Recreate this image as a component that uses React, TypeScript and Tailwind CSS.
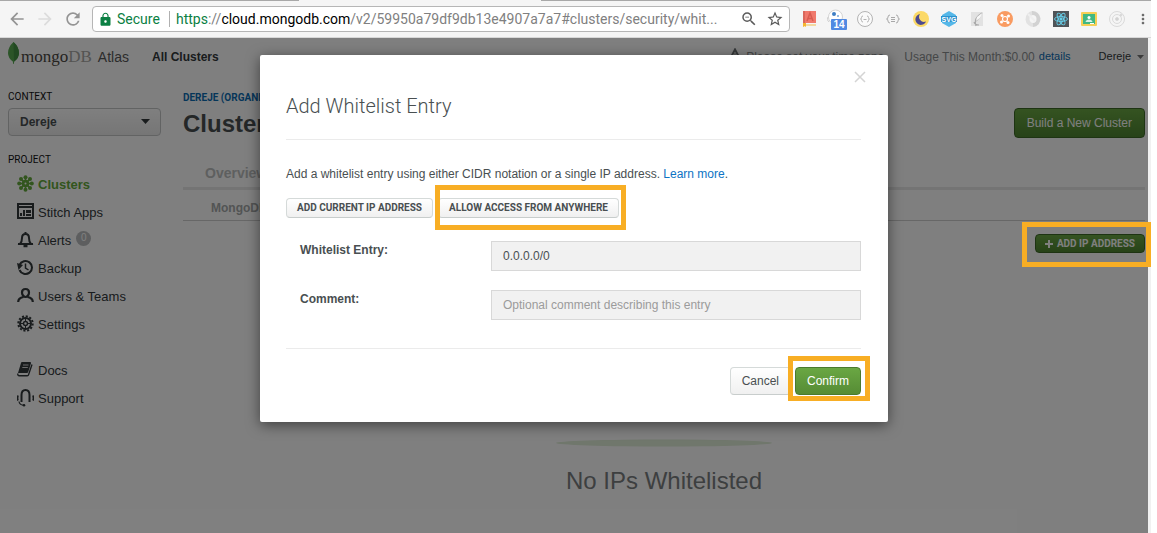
import React from "react";
import { MdArrowBack, MdArrowForward, MdLock, MdMoreVert, MdRefresh, MdStarBorder, MdZoomOut } from "react-icons/md";

function Highlight({ className }: { className: string }) {
  return <span aria-hidden="true" className={`pointer-events-none absolute z-20 border-5 border-[#f8ae24] ${className}`} />;
}

function ExtensionIcons() {
  const icons = [
    <svg key="book" width="16" height="18" viewBox="0 0 16 18">
      <path d="M2 1h13v12H2z" fill="#f0796c" />
      <path d="M2 1h2v13H2z" fill="#d9675c" />
      <path d="M2 14h13v2H4l-2 1z" fill="#f3d9a0" />
      <path d="M2 13h3v4l-1.500-1L2 17z" fill="#f5b52e" />
      <path d="M6 11l3-8 3 8M7 8.500h4" stroke="#d85b50" strokeWidth="1.500" fill="none" />
    </svg>,
    <svg key="ghost" width="20" height="22" viewBox="0 0 20 22">
      <circle cx="8.500" cy="9" r="7" fill="#fff" stroke="#d4d4d4" />
      <path d="M1 9q-2 3 1 5" stroke="#cfcfcf" fill="none" />
      <circle cx="7" cy="6" r="2" fill="#3f7fc4" />
      <circle cx="11" cy="8" r="1" fill="#7ba9d8" />
      <rect x="4" y="11" width="16" height="11" rx="1" fill="#5089e2" />
      <text x="12" y="20" textAnchor="middle" fontSize="10" fontWeight="bold" fill="#fff" fontFamily="Liberation Sans, sans-serif">14</text>
    </svg>,
    <svg key="braces" width="18" height="18" viewBox="0 0 18 18" fill="none" stroke="#b4b4b4">
      <circle cx="9" cy="9" r="7.500" fill="#fafafa" />
      <path d="M7 6q-1.500 0-1.500 1.500T4.500 9q1 0 1 1.500T7 12M11 6q1.500 0 1.500 1.500T13.500 9q-1 0-1 1.500T11 12M7.500 9.500h3" />
    </svg>,
    <svg key="json" width="16" height="16" viewBox="0 0 16 16" fill="none" stroke="#a8a8a8">
      <path d="M5 4Q3 4 3 6T1.500 8Q3 8 3 10t2 2M11 4q2 0 2 2t1.500 2Q13 8 13 10t-2 2M6 6.500h4M6 8.500h4M6 10.500h4" />
    </svg>,
    <svg key="moon" width="18" height="18" viewBox="0 0 18 18">
      <circle cx="9" cy="9" r="8" fill="#fbd967" />
      <path d="M8 4a5.500 5.500 0 1 0 6 7.500A5 5 0 0 1 8 4z" fill="#4d4a8f" />
    </svg>,
    <svg key="svg" width="18" height="18" viewBox="0 0 18 18">
      <path d="M9 1l7 4v8l-7 4-7-4V5z" fill="#55b7e8" />
      <path d="M1 6h16v6H1z" fill="#2d93cf" />
      <text x="9" y="12" textAnchor="middle" fontSize="7" fontWeight="bold" fill="#fff" fontFamily="Liberation Sans, sans-serif">SVG</text>
    </svg>,
    <svg key="feather" width="14" height="18" viewBox="0 0 14 18">
      <path d="M1 2h12v14H1z" fill="#e2e2e2" />
      <path d="M12 3Q6 7 5.500 10T6 16M6 11l4-4M4 12q1 3 5 3" stroke="#aaa" strokeWidth="1.200" fill="none" />
      <path d="M12 3l-5 4-1 4 4-3z" fill="#f7f7f7" />
    </svg>,
    <svg key="orange" width="18" height="18" viewBox="0 0 18 18">
      <circle cx="9" cy="9" r="8" fill="#f99b61" />
      <circle cx="9" cy="9" r="2.500" fill="none" stroke="#fff" strokeWidth="1.200" />
      <g fill="#fff"><circle cx="6" cy="5.500" r="1.500" /><circle cx="12.500" cy="6" r="1.500" /><circle cx="5.500" cy="12" r="1.500" /><circle cx="12" cy="12.500" r="1.500" /></g>
    </svg>,
    <svg key="ring" width="18" height="18" viewBox="0 0 18 18" fill="none" strokeWidth="4">
      <path d="M9 3a6 6 0 0 0 1 12" stroke="#e2e2e2" />
      <path d="M8 3a6 6 0 0 1 1 12" stroke="#d2d2d2" />
      <path d="M4 4l7 7" stroke="#efefef" strokeWidth="2" />
    </svg>,
    <svg key="react" width="16" height="16" viewBox="0 0 16 16" fill="none" stroke="#66cfea" strokeWidth=".9">
      <path d="M0 0h16v16H0z" fill="#4f5458" stroke="none" />
      <ellipse cx="8" cy="8" rx="6.500" ry="2.500" />
      <ellipse cx="8" cy="8" rx="6.500" ry="2.500" transform="rotate(60 8 8)" />
      <ellipse cx="8" cy="8" rx="6.500" ry="2.500" transform="rotate(120 8 8)" />
      <circle cx="8" cy="8" r="1.200" fill="#66cfea" />
    </svg>,
    <svg key="board" width="16" height="16" viewBox="0 0 16 16">
      <rect y="1" width="16" height="14" rx="1" fill="#f6cf55" />
      <path d="M2 3h12v10H2z" fill="#41b883" />
      <circle cx="8" cy="6.500" r="1.500" fill="#fff" />
      <path d="M4.500 11q.5-2.500 3.500-2.500t3.500 2.500z" fill="#d9f2e6" />
      <path d="M9 12h4v1H9z" fill="#fff" />
    </svg>,
    <svg key="orbit" width="18" height="18" viewBox="0 0 18 18" fill="none" stroke="#dadada">
      <circle cx="9" cy="9" r="7.500" />
      <circle cx="9" cy="9" r="4.500" />
      <circle cx="9" cy="9" r="1.500" fill="#d0d0d0" />
      <circle cx="13" cy="5" r="1" fill="#d0d0d0" />
    </svg>,
  ];
  return (
    <div className="ml-[5px] flex h-full shrink-0 items-center">
      {icons.map((icon) => (
        <span key={icon.key} className="flex w-7 justify-center">{icon}</span>
      ))}
    </div>
  );
}

function BrowserBar() {
  return (
    <header className="flex h-[38px] shrink-0 flex-col border-b border-[#d8d8d8] bg-[#f5f5f5]">
      <div className="flex h-px">
        <span className="w-[299px] bg-[#a8a8a8]" />
        <span className="w-[242px]" />
        <span className="flex-1 bg-[#a8a8a8]" />
      </div>
      <div className="flex flex-1 items-center">
        <div className="flex w-[92px] items-center gap-2 pl-[7px]">
          <button aria-label="Back" className="text-[#949494]"><MdArrowBack size={20} /></button>
          <button aria-label="Forward" className="text-[#dcdcdc]"><MdArrowForward size={20} /></button>
          <button aria-label="Reload" className="text-[#949494]"><MdRefresh size={20} /></button>
        </div>
        <div className="flex h-[26px] min-w-0 flex-1 items-center rounded-sm border border-[#b6b6b6] bg-white pr-[5px] font-[Roboto,sans-serif] text-sm">
          <MdLock size={15} className="ml-[5px] shrink-0 text-[#0b8043]" />
          <span className="ml-1 w-[52px] whitespace-nowrap text-[#0b8043]">Secure</span>
          <span className="mr-1.5 h-4 w-px bg-[#b0b0b0]" />
          <span className="flex-1 truncate text-[#808080]">
            <span className="text-[#0b8043]">https</span>://<span className="text-black">cloud.mongodb.com</span>/v2/59950a79df9db13e4907a7a7#clusters/security/whit...
          </span>
          <MdZoomOut size={18} className="mr-2 shrink-0 text-[#5a5a5a]" />
          <MdStarBorder size={18} className="shrink-0 text-[#5a5a5a]" />
        </div>
        <ExtensionIcons />
        <button aria-label="Browser menu" className="flex w-5 justify-end text-[#6a6a6a]"><MdMoreVert size={16} /></button>
      </div>
    </header>
  );
}

function ClusterIcon() {
  return (
    <svg width="17" height="17" viewBox="0 0 17 17" fill="#65ab3c" stroke="#65ab3c" strokeWidth="1.600">
      <path d="M8.500 2v13M2 8.500h13M4 4l9 9M13 4l-9 9" />
      <g stroke="none">
        <circle cx="8.500" cy="2.200" r="2" /><circle cx="8.500" cy="14.800" r="2" /><circle cx="2.200" cy="8.500" r="2" /><circle cx="14.800" cy="8.500" r="2" />
        <circle cx="4" cy="4" r="2" /><circle cx="13" cy="4" r="2" /><circle cx="4" cy="13" r="2" /><circle cx="13" cy="13" r="2" />
        <circle cx="8.500" cy="8.500" r="3.800" />
      </g>
      <circle cx="8.500" cy="8.500" r="1" fill="#fff" stroke="none" />
    </svg>
  );
}

function AppsIcon() {
  return (
    <svg width="17" height="17" viewBox="0 0 17 17" fill="#32383b">
      <path d="M0 0h17v16H0zM2 2v1h13V2zM2 5v9h13V5z" fillRule="evenodd" />
      <path d="M3 10h2v3H3zM6 7h2v6H6zM9 7h5v3H9zM9 11h5v2H9z" />
    </svg>
  );
}

function BellIcon() {
  return (
    <svg width="17" height="17" viewBox="0 0 17 17" fill="none" stroke="#32383b" strokeWidth="2">
      <path d="M3 13q2-2 2-6 0-4 3.500-4T12 7q0 4 2 6zM8.500 3V1" />
      <path d="M1 13h15" />
      <path d="M6.500 15h4" strokeWidth="2.500" />
    </svg>
  );
}

function BackupIcon() {
  return (
    <svg width="17" height="17" viewBox="0 0 17 17" fill="none" stroke="#32383b" strokeWidth="2">
      <path d="M2.500 6a6.500 6.500 0 1 1 0 5" />
      <path d="M8.500 4.500V9l3 2" strokeWidth="1.500" />
      <path d="M0 4l6 2-4.500 5z" fill="#32383b" stroke="none" />
    </svg>
  );
}

function UserIcon() {
  return (
    <svg width="17" height="17" viewBox="0 0 17 17" fill="none" stroke="#32383b" strokeWidth="2.200">
      <path d="M8.500 2C6 2 5 3.500 5 5.500S6.500 10 8.500 10 12 7.500 12 5.500 11 2 8.500 2z" />
      <path d="M1.200 15q0-4 5.300-5M15.800 15q0-4-5.300-5" />
    </svg>
  );
}

function GearIcon() {
  return (
    <svg width="17" height="17" viewBox="0 0 17 17" fill="none" stroke="#32383b">
      <circle cx="8.500" cy="8.500" r="7.200" strokeWidth="2" strokeDasharray="2.100 1.670" />
      <circle cx="8.500" cy="8.500" r="5.500" strokeWidth="2" />
      <circle cx="8.500" cy="8.500" r="2" strokeWidth="1.500" />
      <path d="M8.500 3v3.500M8.500 10.500V14M3 8.500h3.500M10.500 8.500H14" />
    </svg>
  );
}

function BookIcon() {
  return (
    <svg width="17" height="17" viewBox="0 0 17 17" fill="#32383b">
      <path d="M5 1h8q1.300 0 1 1.200l-2.700 8.600q-.3 1.200-1.500 1.200H1L4 2q.2-1 1-1z" />
      <path d="M.8 12.500q-.3 2.200 1.500 2.200h8q1 0 1.300-1.100L15 3.500" fill="none" stroke="#32383b" strokeWidth="1.400" />
      <path d="M6 4h5.500M5.300 6.500h5.500" stroke="#fff" strokeOpacity=".8" />
    </svg>
  );
}

function HeadsetIcon() {
  return (
    <svg width="17" height="18" viewBox="0 0 17 18" fill="none" stroke="#32383b" strokeWidth="2">
      <path d="M4.500 13V6q0-5 4-5t4 5v7" />
      <path d="M1 6.500q-1 3 0 5M16 6.500q1 3 0 5" strokeWidth="1.800" />
      <path d="M2 12.500q.5 3.500 4.500 3.700" strokeWidth="1.200" />
      <circle cx="7" cy="16.200" r="1.300" fill="#32383b" stroke="none" />
    </svg>
  );
}

type NavItem = { label: string; icon: React.ReactNode; active?: boolean; badge?: number };

const projectItems: NavItem[] = [
  { label: "Clusters", icon: <ClusterIcon />, active: true },
  { label: "Stitch Apps", icon: <AppsIcon /> },
  { label: "Alerts", icon: <BellIcon />, badge: 0 },
  { label: "Backup", icon: <BackupIcon /> },
  { label: "Users & Teams", icon: <UserIcon /> },
  { label: "Settings", icon: <GearIcon /> },
];

const helpItems: NavItem[] = [
  { label: "Docs", icon: <BookIcon /> },
  { label: "Support", icon: <HeadsetIcon /> },
];

function NavList({ items }: { items: NavItem[] }) {
  return (
    <ul>
      {items.map((item) => (
        <li key={item.label} className="flex h-7 items-start pl-[9px]">
          <a href="#" className={`flex gap-1 text-[13px] leading-5 ${item.active ? "font-bold text-[#65ab3c]" : "text-[#32383b]"}`}>
            {item.icon}
            <span>{item.label}</span>
          </a>
          {item.badge !== undefined && (
            <span className="ml-[5px] size-[15px] rounded-full bg-[#babdbe] text-center text-[10px] leading-[14px] text-white">{item.badge}</span>
          )}
        </li>
      ))}
    </ul>
  );
}

function TopNav() {
  return (
    <div className="flex h-[37px] items-center pr-1 pl-2 text-xs whitespace-nowrap">
      <a href="#" aria-label="mongoDB Atlas" className="flex w-36 items-center">
        <svg width="11" height="22" viewBox="0 0 11 22" className="mr-0.5 mb-2 shrink-0">
          <path d="M5.500 0Q11 5 11 11q0 5-4.800 8.500L5.800 22h-.6l-.4-2.500Q0 16 0 11q0-6 5.500-11z" fill="#58aa50" />
          <path d="M5.500 0Q11 5 11 11q0 5-5 8.500z" fill="#449245" />
        </svg>
        <span className="font-['Liberation_Serif',serif] text-[17px] leading-6 text-[#4b4843]">mongo<span className="text-[#a9a8a5]">DB</span></span>
        <span className="ml-1.5 text-sm text-[#595959]">Atlas</span>
      </a>
      <a href="#" className="font-bold text-[#32383b]">All Clusters</a>
      <div className="ml-auto flex items-center">
        <svg width="14" height="14" viewBox="0 0 14 14" className="mr-1 mb-1">
          <path d="M7 1.500L12.500 12h-11z" fill="none" stroke="#6b7072" strokeWidth="2" />
          <path d="M7 5v4M7 10v1" stroke="#6b7072" />
        </svg>
        <a href="#" className="text-[#8b8f91]">Please set your time zone</a>
        <span className="ml-5 text-[#8b8f91]">Usage This Month:$0.00</span>
        <a href="#" className="ml-1 text-[11px] text-[#0b6cb3]">details</a>
        <button className="ml-7 flex items-center gap-1.5 text-[11px] text-[#32383b]">
          Dereje
          <svg width="7" height="4" viewBox="0 0 7 4"><path d="M0 0h7L3.500 4z" fill="#777" /></svg>
        </button>
      </div>
    </div>
  );
}

function Sidebar() {
  return (
    <aside className="w-[153px] shrink-0 pt-4">
      <label htmlFor="context" className="block font-[Roboto,sans-serif] text-[10px] leading-3 text-[#111]">CONTEXT</label>
      <div className="relative mt-[5px]">
        <select id="context" defaultValue="Dereje" className="h-7 w-full appearance-none rounded-sm border border-[#c4c6c7] bg-linear-to-b from-white to-[#ececec] px-[11px] text-xs font-bold text-[#494f51]">
          <option>Dereje</option>
        </select>
        <svg width="9" height="5" viewBox="0 0 9 5" className="pointer-events-none absolute top-[11px] right-[11px]"><path d="M0 0h9L4.500 5z" fill="#32383b" /></svg>
      </div>
      <h2 className="mt-[18px] font-[Roboto,sans-serif] text-[10px] leading-3 text-[#111]">PROJECT</h2>
      <nav className="mt-[9px] flex flex-col gap-[18px]">
        <NavList items={projectItems} />
        <NavList items={helpItems} />
      </nav>
    </aside>
  );
}

function ClustersPage() {
  return (
    <section className="flex min-w-0 flex-1 flex-col pt-[17px]">
      <a href="#" className="font-[Roboto,sans-serif] text-[10px] leading-3 font-bold text-[#0b6cb3]">DEREJE (ORGANIZATION)</a>
      <div className="mt-1 flex items-start justify-between">
        <h1 className="text-2xl leading-8 font-bold text-[#494f51]">Clusters</h1>
        <button className="h-[30px] rounded-sm border border-[#3c6826] bg-linear-to-b from-[#6aa743] to-[#4f8531] px-3 text-xs text-white">Build a New Cluster</button>
      </div>
      <div className="mt-[22px] h-[28px] border-b-3 border-[#e8e8e8] pl-[22px] text-sm leading-[22px] font-bold text-[#bcbebf]">Overview</div>
      <div className="h-[31px] border-b border-[#cfcfcf] pl-7 text-xs leading-9 font-bold text-[#a5a8a9]">MongoDB Users</div>
      <div className="mt-[13px] flex justify-end">
        <div className="relative flex">
          <button className="flex h-[19px] items-center rounded-sm border border-[#3c6826] bg-linear-to-b from-[#6aa743] to-[#4f8531] px-[9px] font-[Roboto,sans-serif] text-[10px] font-bold text-white">
            <svg width="8" height="8" viewBox="0 0 8 8" className="mr-1"><path d="M4 0v8M0 4h8" stroke="#fff" strokeWidth="2" /></svg>
            ADD IP ADDRESS
          </button>
          <Highlight className="-top-[12px] -right-1.5 -bottom-[14px] -left-[13px]" />
        </div>
      </div>
      <div className="mt-[186px] flex flex-col items-center">
        <svg width="218" height="8" viewBox="0 0 218 8"><ellipse cx="109" cy="4" rx="108" ry="3.500" fill="#e0eed8" /></svg>
        <h2 className="mt-[18px] text-2xl leading-8 text-[#7b7f81]">No IPs Whitelisted</h2>
      </div>
    </section>
  );
}

const secondaryButton = "rounded-sm border border-[#d5dad9] border-b-[#c8cdcc] bg-linear-to-b from-white to-[#f0f0f0] text-[#494f51]";
const fieldInput = "h-[30px] min-w-0 flex-1 border border-[#d8d8d8] bg-[#f1f1f1] px-[11px] text-xs text-[#494f51] placeholder:text-[#9b9b9b]";

function WhitelistDialog() {
  return (
    <div role="dialog" aria-labelledby="dialog-title" className="relative w-[628px] rounded-xs bg-white pt-8 pr-[27px] pb-[27px] pl-[26px] text-xs text-[#494f51] shadow-[0_3px_14px_rgba(0,0,0,0.5)]">
      <button aria-label="Close" className="absolute top-4 right-[22px]">
        <svg width="12" height="12" viewBox="0 0 12 12"><path d="M1 1l10 10M11 1L1 11" stroke="#d4d4d4" strokeWidth="1.500" /></svg>
      </button>
      <h2 id="dialog-title" className="border-b border-[#ebebeb] pb-[14px] font-[Roboto,sans-serif] text-xl leading-[38px] font-light">Add Whitelist Entry</h2>
      <p className="mt-[26px] leading-4">
        Add a whitelist entry using either CIDR notation or a single IP address. <a href="#" className="text-[#0d74c4]">Learn more</a>.
      </p>
      <div className="mt-4 flex gap-[5px] font-[Roboto,sans-serif] text-[10px] font-bold">
        <button className={`h-5 px-2.5 ${secondaryButton}`}>ADD CURRENT IP ADDRESS</button>
        <div className="relative flex">
          <button className={`h-5 px-2.5 ${secondaryButton}`}>ALLOW ACCESS FROM ANYWHERE</button>
          <Highlight className="-top-[13px] -right-[7px] -bottom-3 -left-[3px]" />
        </div>
      </div>
      <form className="mt-[23px]">
        <div className="flex pl-[14px]">
          <label htmlFor="entry" className="w-[191px] shrink-0 leading-[18px] font-bold">Whitelist Entry:</label>
          <input id="entry" type="text" defaultValue="0.0.0.0/0" className={fieldInput} />
        </div>
        <div className="mt-[19px] flex pl-[14px]">
          <label htmlFor="comment" className="w-[191px] shrink-0 leading-[18px] font-bold">Comment:</label>
          <input id="comment" type="text" placeholder="Optional comment describing this entry" className={fieldInput} />
        </div>
        <div className="mt-7 flex justify-end gap-1 border-t border-[#ebebeb] pt-[18px] text-xs">
          <button type="button" className={`h-7 px-[11px] ${secondaryButton}`}>Cancel</button>
          <div className="relative flex">
            <button type="button" className="h-7 rounded-sm border border-[#4a7a2f] bg-linear-to-b from-[#6aa743] to-[#568c35] px-[11px] text-white">Confirm</button>
            <Highlight className="-top-[11px] -right-[9px] -bottom-1.5 -left-[7px]" />
          </div>
        </div>
      </form>
    </div>
  );
}

export default function App() {
  return (
    <div className="flex min-h-screen flex-col bg-white pr-1.5 font-['Liberation_Sans',Arial,sans-serif]">
      <BrowserBar />
      <div className="flex flex-1 bg-[#f1f1f1] pr-[3px]">
        <main className="relative min-w-0 flex-1 bg-white">
          <TopNav />
          <div className="flex gap-[22px] pr-[3px] pl-2">
            <Sidebar />
            <ClustersPage />
          </div>
          <div className="absolute inset-0 z-10 flex items-start justify-center bg-black/50 pt-[17px]">
            <WhitelistDialog />
          </div>
        </main>
      </div>
    </div>
  );
}
